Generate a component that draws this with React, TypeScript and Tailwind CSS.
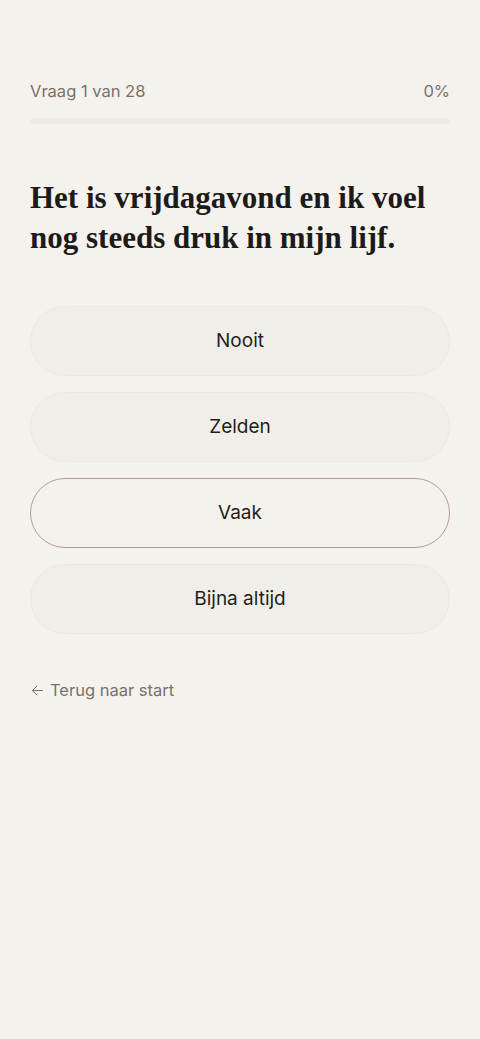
import React from "react";

const options = ["Nooit", "Zelden", "Vaak", "Bijna altijd"];

export default function App() {
  const selected = 2;
  return (
    <div className="min-h-[1039px] w-full bg-[#f5f2ee] px-[30px] pt-[80px]" style={{ fontFamily: "Inter, 'Noto Sans', sans-serif" }}>
      <div className="flex items-center justify-between text-[16.5px] leading-[22px] text-[#77716b]">
        <span>Vraag 1 van 28</span>
        <span>0%</span>
      </div>
      <div className="mt-[16px] h-[6px] w-full rounded-full bg-[#eeeae5]" />
      <h1
        className="mt-[54px] text-[31px] font-bold leading-[40px] text-[#1c1b19]"
        style={{ fontFamily: "'Liberation Serif', 'DejaVu Serif', serif" }}
      >
        Het is vrijdagavond en ik voel nog steeds druk in mijn lijf.
      </h1>
      <div className="mt-[48px] flex flex-col gap-[16px]">
        {options.map((o, i) => (
          <button
            key={o}
            className={
              i === selected
                ? "flex h-[70px] w-full items-center justify-center rounded-full border border-[#b39e8a] bg-[#f5f2ee] text-[19px] text-[#1f1e1c]"
                : "flex h-[70px] w-full items-center justify-center rounded-full border border-[#ebe7e2] bg-[#f1eeea] text-[19px] text-[#1f1e1c]"
            }
          >
            {o}
          </button>
        ))}
      </div>
      <div className="mt-[44px] flex items-center gap-[5px] text-[16.5px] text-[#77716b]">
        <svg width="15" height="15" viewBox="0 0 24 24" fill="none" stroke="currentColor" strokeWidth="1.6" strokeLinecap="round" strokeLinejoin="round">
          <path d="M20 12H4" />
          <path d="M11 19l-7-7 7-7" />
        </svg>
        <span>Terug naar start</span>
      </div>
    </div>
  );
}
